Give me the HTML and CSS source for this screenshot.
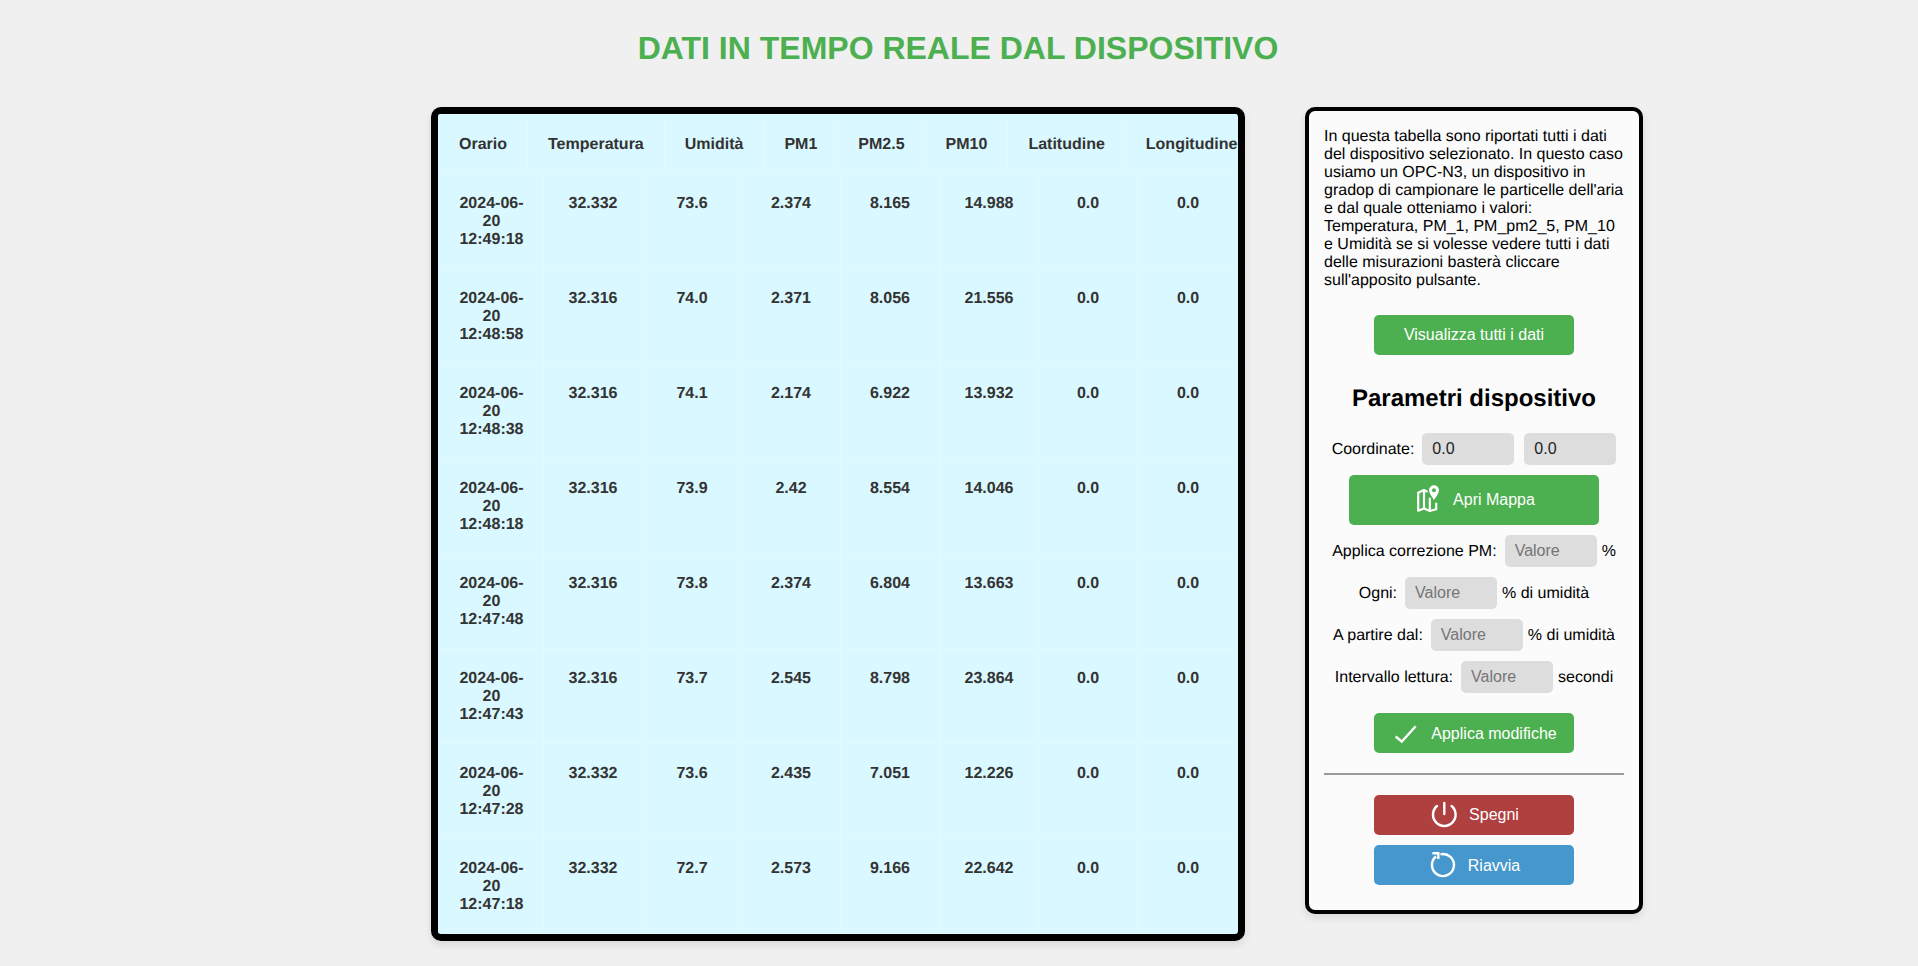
FILE: index.html
```html
<!DOCTYPE html>
<html lang="it">
<head>
<meta charset="utf-8">
<title>Dati in tempo reale</title>
<link rel="stylesheet" href="styles.css">
</head>
<body>
<h1 class="title">DATI IN TEMPO REALE DAL DISPOSITIVO</h1>
<main class="layout">
  <section class="table-card">
    <table class="head-table">
      <thead>
        <tr><th>Orario</th><th>Temperatura</th><th>Umidità</th><th>PM1</th><th>PM2.5</th><th>PM10</th><th>Latitudine</th><th>Longitudine</th></tr>
      </thead>
    </table>
    <table class="body-table">
      <colgroup><col class="col-time"><col class="col-val"><col class="col-val"><col class="col-val"><col class="col-val"><col class="col-val"><col class="col-val"><col class="col-last"></colgroup>
      <tbody>
        <tr><td>2024-06-20 12:49:18</td><td>32.332</td><td>73.6</td><td>2.374</td><td>8.165</td><td>14.988</td><td>0.0</td><td>0.0</td></tr>
        <tr><td>2024-06-20 12:48:58</td><td>32.316</td><td>74.0</td><td>2.371</td><td>8.056</td><td>21.556</td><td>0.0</td><td>0.0</td></tr>
        <tr><td>2024-06-20 12:48:38</td><td>32.316</td><td>74.1</td><td>2.174</td><td>6.922</td><td>13.932</td><td>0.0</td><td>0.0</td></tr>
        <tr><td>2024-06-20 12:48:18</td><td>32.316</td><td>73.9</td><td>2.42</td><td>8.554</td><td>14.046</td><td>0.0</td><td>0.0</td></tr>
        <tr><td>2024-06-20 12:47:48</td><td>32.316</td><td>73.8</td><td>2.374</td><td>6.804</td><td>13.663</td><td>0.0</td><td>0.0</td></tr>
        <tr><td>2024-06-20 12:47:43</td><td>32.316</td><td>73.7</td><td>2.545</td><td>8.798</td><td>23.864</td><td>0.0</td><td>0.0</td></tr>
        <tr><td>2024-06-20 12:47:28</td><td>32.332</td><td>73.6</td><td>2.435</td><td>7.051</td><td>12.226</td><td>0.0</td><td>0.0</td></tr>
        <tr><td>2024-06-20 12:47:18</td><td>32.332</td><td>72.7</td><td>2.573</td><td>9.166</td><td>22.642</td><td>0.0</td><td>0.0</td></tr>
      </tbody>
    </table>
  </section>
  <aside class="side-card">
    <p class="intro">In questa tabella sono riportati tutti i dati del dispositivo selezionato. In questo caso usiamo un OPC-N3, un dispositivo in gradop di campionare le particelle dell'aria e dal quale otteniamo i valori: Temperatura, PM_1, PM_pm2_5, PM_10 e Umidità se si volesse vedere tutti i dati delle misurazioni basterà cliccare sull'apposito pulsante.</p>
    <button class="btn btn-green">Visualizza tutti i dati</button>
    <h2 class="side-title">Parametri dispositivo</h2>
    <div class="field">
      <label class="field-label">Coordinate:</label>
      <input class="field-input" value="0.0">
      <input class="field-input field-input-next" value="0.0">
    </div>
    <button class="btn btn-green btn-map">
      <svg class="icon" viewBox="0 0 30 30" fill="none" stroke="#fff" stroke-width="2.2" stroke-linejoin="round" stroke-linecap="round">
        <path d="M5.2 7.8 V25.8 L11 23.4 L16.8 26 L23.2 24.2 V18.5"/>
        <path d="M5.2 7.8 L11 5 L13.8 6.4"/>
        <path d="M11 5 V23.4 M16.8 13.5 V26"/>
        <path fill="#fff" stroke="none" fill-rule="evenodd" d="M21 0.3 A5 5 0 0 1 26 5.3 C26 8.3 23 11.5 21 15 C19 11.5 16 8.3 16 5.3 A5 5 0 0 1 21 0.3 Z M21 3.2 A2 2 0 1 0 21 7.2 A2 2 0 1 0 21 3.2 Z"/>
      </svg>
      <span>Apri Mappa</span>
    </button>
    <div class="field">
      <label class="field-label">Applica correzione PM:</label>
      <input class="field-input" placeholder="Valore">
      <span class="field-unit">%</span>
    </div>
    <div class="field">
      <label class="field-label">Ogni:</label>
      <input class="field-input" placeholder="Valore">
      <span class="field-unit">% di umidità</span>
    </div>
    <div class="field">
      <label class="field-label">A partire dal:</label>
      <input class="field-input" placeholder="Valore">
      <span class="field-unit">% di umidità</span>
    </div>
    <div class="field">
      <label class="field-label">Intervallo lettura:</label>
      <input class="field-input" placeholder="Valore">
      <span class="field-unit">secondi</span>
    </div>
    <button class="btn btn-green btn-apply">
      <svg class="icon" viewBox="0 0 30 30" fill="none" stroke="#fff" stroke-width="2.4">
        <path d="M4.7 18.5 L10.8 23.6 L24.7 8.3"/>
      </svg>
      <span>Applica modifiche</span>
    </button>
    <hr class="divider">
    <button class="btn btn-red">
      <svg class="icon" viewBox="0 0 30 30" fill="none" stroke="#fff" stroke-width="2.4" stroke-linecap="round">
        <path d="M8 6 A11.3 11.3 0 1 0 22.6 6"/>
        <path d="M15.3 3 V14"/>
      </svg>
      <span>Spegni</span>
    </button>
    <button class="btn btn-blue">
      <svg class="icon" viewBox="0 0 30 30" fill="none" stroke="#fff" stroke-width="2.4">
        <path d="M12.5 4.3 A11 11 0 1 1 8 6.5"/>
        <path d="M4.4 3.2 H10.3 V9"/>
      </svg>
      <span class="btn-text-low">Riavvia</span>
    </button>
  </aside>
</main>
</body>
</html>
```
FILE: styles.css
```css
* { box-sizing: border-box; }
html, body { margin: 0; padding: 0; }
body {
  background: #f0f0f0;
  font-family: "Liberation Sans", Arial, sans-serif;
  font-size: 16px;
  line-height: 18px;
  color: #000;
  text-rendering: geometricPrecision;
}
.title {
  margin: 0;
  padding: 30px 2px 0 0;
  height: 107px;
  text-align: center;
  font-size: 32px;
  line-height: 37px;
  font-weight: 700;
  color: #4caf50;
}
.layout {
  display: flex;
  align-items: flex-start;
  gap: 60px;
  padding-left: 431px;
  padding-bottom: 25px;
}
.table-card {
  width: 814px;
  height: 834px;
  flex: none;
  border: 7px solid #000;
  border-radius: 10px;
  background: #daf8ff;
  box-shadow: 0 4px 8px rgba(0, 0, 0, 0.1);
  overflow: hidden;
  color: #333;
  font-weight: 700;
}
.head-table, .body-table {
  border-collapse: separate;
  border-spacing: 0;
}
.head-table th {
  padding: 21px 20px 19px;
  font-weight: 700;
  white-space: nowrap;
  text-align: left;
  border-left: 1px solid #e2f9ff;
  border-top: 1px solid #e2f9ff;
}
.body-table {
  table-layout: fixed;
  width: 800px;
}
.col-time { width: 105px; }
.col-val { width: 99px; }
.col-last { width: 101px; }
.body-table td {
  padding: 21px 20px 19px;
  text-align: center;
  vertical-align: top;
  border-left: 1px solid #e2f9ff;
  border-top: 1px solid #e2f9ff;
}
.body-table td:first-child { padding-right: 19px; }
.side-card {
  width: 338px;
  height: 807px;
  flex: none;
  display: flex;
  flex-direction: column;
  align-items: center;
  border: 4px solid #000;
  border-radius: 10px;
  background: #fbfbfb;
  box-shadow: 0 4px 8px rgba(0, 0, 0, 0.1);
  padding: 15px;
}
.intro { margin: 2px 0 25px; width: 100%; }
.btn {
  display: flex;
  align-items: center;
  justify-content: center;
  gap: 10px;
  width: 200px;
  height: 40px;
  flex: none;
  border: 0;
  border-radius: 5px;
  padding: 0;
  color: #fff;
  font-family: inherit;
  font-size: 16px;
}
.btn-green { background: #4caf50; }
.btn-red { background: #af4040; margin-bottom: 10px; }
.btn-blue { background: #4697cd; }
.btn-map { width: 250px; height: 50px; margin: 10px 0 10px; }
.btn-apply { margin-top: 20px; }
.btn-apply span, .btn-text-low { padding-top: 2px; }
.icon { width: 30px; height: 30px; flex: none; }
.side-title {
  margin: 30px 0 21px;
  font-size: 24px;
  line-height: 27px;
  font-weight: 700;
  text-align: center;
}
.field {
  display: flex;
  align-items: center;
  justify-content: center;
  width: 100%;
  height: 32px;
  flex: none;
  white-space: nowrap;
}
.field + .field { margin-top: 10px; }
.field-label { margin-right: 8px; padding-top: 2px; }
.field-input {
  width: 92px;
  height: 32px;
  border: 0;
  border-radius: 5px;
  padding: 0 10px;
  background: #ddd;
  font-family: inherit;
  font-size: 16px;
  color: #222;
}
.field-input::placeholder { color: #757575; opacity: 1; }
.field-input-next { margin-left: 10px; }
.field-unit { margin-left: 5px; padding-top: 2px; }
.divider {
  width: 100%;
  height: 2px;
  flex: none;
  margin: 20px 0;
  border: 0;
  background: #999;
}
```
